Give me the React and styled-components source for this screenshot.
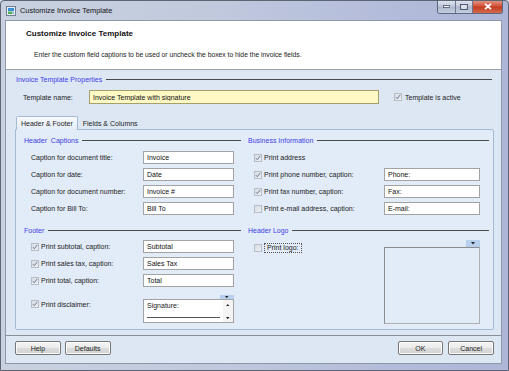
import React from "react";
import styled, { createGlobalStyle } from "styled-components";

const GlobalStyle = createGlobalStyle`
  html, body { margin: 0; padding: 0; }
  body { font-family: "Liberation Sans", Arial, sans-serif; background: #d8dde6; }
  * { box-sizing: border-box; }
`;

const Window = styled.div`
  width: 509px;
  height: 371px;
  display: flex;
  flex-direction: column;
  background: linear-gradient(90deg, #c9d1e0 0%, #c1cadd 40%, #b4bcdb 75%, #aeb6d8 100%);
  border: 1px solid #5d6573;
  border-radius: 4px 4px 0 0;
  overflow: hidden;
  color: #1b1b1b;
  font-size: 7px;
`;

const TitleBar = styled.div`
  height: 19px;
  display: flex;
  align-items: flex-start;
`;

const AppIcon = styled.div`
  width: 10px;
  height: 10px;
  margin: 5px 4px 0 5px;
  display: flex;
`;

const TitleText = styled.div`
  margin-top: 5px;
  font-size: 7.4px;
  color: #111;
`;

const Controls = styled.div`
  margin-left: auto;
  margin-right: 5px;
  display: flex;
  height: 14px;
  margin-top: -1px;
  border: 1px solid #5c6880;
  border-top: none;
  border-radius: 0 0 3px 3px;
  overflow: hidden;
`;

const CtrlButton = styled.div`
  width: ${(p) => p.$w}px;
  height: 100%;
  display: flex;
  align-items: center;
  justify-content: center;
  background: ${(p) =>
    p.$close
      ? "linear-gradient(180deg, #e3a08f 0%, #d2553c 45%, #c23d22 55%, #d76a4a 100%)"
      : "linear-gradient(180deg, #e2e7f1 0%, #c3cbdc 45%, #aeb8cd 55%, #c6cfe0 100%)"};
  border-left: ${(p) => (p.$first ? "none" : "1px solid #6d7890")};
`;

const Client = styled.div`
  flex: 1;
  margin: 0 6px 6px 4px;
  display: flex;
  flex-direction: column;
  border: 1px solid #8e98a9;
  background: #dde7f4;
`;

const Header = styled.div`
  height: 49px;
  background: #ffffff;
  border-bottom: 1px solid #9aa1ab;
  padding: 8px 0 0 20px;
  display: flex;
  flex-direction: column;
`;

const HeaderTitle = styled.div`
  font-weight: bold;
  font-size: 8px;
  color: #111;
  height: 10px;
  line-height: 10px;
`;

const HeaderDesc = styled.div`
  margin: 11px 0 0 8px;
  font-size: 6.75px;
  color: #222;
  height: 10px;
  line-height: 10px;
`;

const Body = styled.div`
  flex: 1;
  display: flex;
  flex-direction: column;
  padding: 4px 7px 5px 9px;
`;

const GroupHeading = styled.div`
  display: flex;
  align-items: center;
  height: 10px;
  margin-left: ${(p) => p.$indent || 0}px;
  margin-right: ${(p) => p.$right || 0}px;
  color: #3d3de4;
  font-size: 7px;
  white-space: nowrap;
  &::after {
    content: "";
    flex: 1;
    height: 1px;
    background: #4a4a4a;
    margin-left: 4px;
  }
`;

const TemplateRow = styled.div`
  display: flex;
  align-items: center;
  height: 14px;
  margin: 6px 0 0 8px;
`;

const Label = styled.span`
  white-space: nowrap;
  color: #1b1b1b;
  font-size: 7px;
`;

const TemplateLabel = styled(Label)`
  width: 66px;
`;

const TextBox = styled.input`
  width: ${(p) => p.$w}px;
  height: ${(p) => p.$h || 13}px;
  border: 1px solid ${(p) => (p.$yellow ? "#a79f6b" : "#a3a3a3")};
  background: ${(p) => (p.$yellow ? "#fdf9c4" : "#ffffff")};
  font-family: "Liberation Sans", Arial, sans-serif;
  font-size: 7px;
  color: #111;
  padding: 0 3px;
  outline: none;
  margin: 0;
`;

const ActiveWrap = styled.label`
  display: flex;
  align-items: center;
  gap: 3px;
  margin-left: 15px;
`;

const Box = styled.span`
  width: 8px;
  height: 8px;
  flex: none;
  border: 1px solid #b8bcc4;
  background: linear-gradient(135deg, #d9dde3 0%, #eef0f3 100%);
  display: flex;
  align-items: center;
  justify-content: center;
`;

const Check = ({ on }) => (
  <Box>
    {on && (
      <svg width="6" height="6" viewBox="0 0 6 6">
        <path d="M0.9 3.2 L2.3 4.7 L5.2 0.9" fill="none" stroke="#5a6b8c" strokeWidth="0.9" />
      </svg>
    )}
  </Box>
);

const TabStrip = styled.div`
  display: flex;
  align-items: flex-end;
  height: 14px;
  margin-top: 11px;
  padding-left: 1px;
`;

const Tab = styled.div`
  height: ${(p) => (p.$active ? 14 : 12)}px;
  padding: 0 ${(p) => (p.$active ? 4 : 5)}px;
  display: flex;
  align-items: center;
  font-size: 7px;
  white-space: nowrap;
  background: ${(p) => (p.$active ? "linear-gradient(180deg, #f7fafd, #e3ecf8)" : "transparent")};
  border: ${(p) => (p.$active ? "1px solid #a4bbd6" : "none")};
  border-bottom: none;
  border-radius: 2px 2px 0 0;
  margin-bottom: ${(p) => (p.$active ? -1 : 0)}px;
  position: relative;
  z-index: 1;
`;

const Panel = styled.div`
  flex: 1;
  background: #e2ebf8;
  border: 1px solid #a4bbd6;
  border-radius: 0 2px 2px 2px;
  padding: 5px 4px 0 8px;
  display: grid;
  grid-template-columns: 217px 242px;
  grid-template-rows: 80px auto;
  column-gap: 7px;
  row-gap: 10px;
  align-content: start;
`;

const Section = styled.div`
  display: flex;
  flex-direction: column;
`;

const Rows = styled.div`
  display: flex;
  flex-direction: column;
  gap: ${(p) => p.$gap ?? 4}px;
  margin-top: ${(p) => p.$top ?? 6}px;
  padding-left: ${(p) => p.$indent}px;
`;

const Row = styled.div`
  display: grid;
  grid-template-columns: ${(p) => p.$col}px auto;
  align-items: ${(p) => p.$align || "center"};
  min-height: 13px;
`;

const CheckLabel = styled.div`
  display: flex;
  align-items: center;
  gap: ${(p) => p.$gap ?? 2}px;
  margin-top: ${(p) => p.$top || 0}px;
`;

const FocusLabel = styled.span`
  border: 1px dotted #555;
  padding: 0 2px;
  line-height: 8px;
  white-space: nowrap;
`;

const DropTab = styled.div`
  width: 14px;
  height: ${(p) => p.$h}px;
  align-self: flex-end;
  background: #b6d0ee;
  display: flex;
  align-items: center;
  justify-content: center;
`;

const MemoWrap = styled.div`
  width: 91px;
  display: flex;
  flex-direction: column;
`;

const Memo = styled.div`
  height: 24px;
  border: 1px solid #a3a3a3;
  background: #ffffff;
  display: flex;
`;

const MemoText = styled.div`
  flex: 1;
  padding: 2px 3px 0;
  display: flex;
  flex-direction: column;
  font-size: 7px;
`;

const SigLine = styled.div`
  height: 1px;
  background: #555;
  margin-top: 8px;
`;

const ScrollBar = styled.div`
  width: 10px;
  display: flex;
  flex-direction: column;
  justify-content: space-between;
  align-items: center;
  padding: 4px 0 3px;
  background: #f4f4f4;
`;

const LogoWrap = styled.div`
  display: flex;
  flex-direction: column;
  width: 96px;
`;

const LogoBox = styled.div`
  height: 77px;
  border: 1px solid #8d8d8d;
  border-right-color: #b0b0b0;
  border-bottom-color: #b0b0b0;
  background: #e2ebf8;
`;

const BottomBar = styled.div`
  height: 28px;
  border-top: 1px solid #8a9099;
  display: flex;
  align-items: flex-start;
  padding: 5px 7px 0 9px;
  gap: 4px;
`;

const Button = styled.button`
  width: 46px;
  height: 14px;
  margin-left: ${(p) => p.$ml || 0}px;
  padding: 0;
  border: 1px solid #767676;
  border-radius: 2px;
  background: linear-gradient(180deg, #f4f4f4 0%, #ebebeb 48%, #dcdcdc 52%, #d2d2d2 100%);
  font-family: "Liberation Sans", Arial, sans-serif;
  font-size: 7px;
  color: #1b1b1b;
  box-shadow: inset 0 0 0 1px #fbfbfb;
`;

const Tri = ({ down = true, size = 4 }) => (
  <svg width={size} height={size / 2 + 0.5} viewBox="0 0 4 2.5">
    <path d={down ? "M0 0 H4 L2 2.5 Z" : "M0 2.5 H4 L2 0 Z"} fill="#222" />
  </svg>
);

const InvoiceIcon = () => (
  <svg width="10" height="10" viewBox="0 0 10 10">
    <rect x="0.5" y="0.5" width="9" height="9" fill="#e9eef4" stroke="#6d7f95" />
    <rect x="2" y="2" width="6" height="3" fill="#3b8fd6" />
    <rect x="2" y="5.5" width="4" height="2.5" fill="#4fae49" />
    <rect x="6.3" y="5.5" width="1.7" height="2.5" fill="#8fb1d6" />
  </svg>
);

const captions = [
  ["Caption for document title:", "Invoice"],
  ["Caption for date:", "Date"],
  ["Caption for document number:", "Invoice #"],
  ["Caption for Bill To:", "Bill To"],
];

const business = [
  ["Print address", true, null],
  ["Print phone number, caption:", true, "Phone:"],
  ["Print fax number, caption:", true, "Fax:"],
  ["Print e-mail address, caption:", false, "E-mail:"],
];

const footer = [
  ["Print subtotal, caption:", "Subtotal"],
  ["Print sales tax, caption:", "Sales Tax"],
  ["Print total, caption:", "Total"],
];

export default function App() {
  return (
    <>
      <GlobalStyle />
      <Window>
        <TitleBar>
          <AppIcon>
            <InvoiceIcon />
          </AppIcon>
          <TitleText>Customize Invoice Template</TitleText>
          <Controls>
            <CtrlButton $w={17} $first>
              <svg width="7" height="3" viewBox="0 0 7 3">
                <rect x="0.5" y="0.5" width="6" height="2" fill="#fff" stroke="#46526a" strokeWidth="0.8" />
              </svg>
            </CtrlButton>
            <CtrlButton $w={17}>
              <svg width="8" height="6" viewBox="0 0 8 6">
                <rect x="0.5" y="0.5" width="7" height="5" fill="none" stroke="#46526a" strokeWidth="0.9" />
                <rect x="2" y="2" width="4" height="2" fill="none" stroke="#fff" strokeWidth="0.9" />
              </svg>
            </CtrlButton>
            <CtrlButton $w={30} $close>
              <svg width="8" height="7" viewBox="0 0 8 7">
                <path d="M1 0.8 L7 6.2 M7 0.8 L1 6.2" stroke="#fff" strokeWidth="1.8" />
              </svg>
            </CtrlButton>
          </Controls>
        </TitleBar>
        <Client>
          <Header>
            <HeaderTitle>Customize Invoice Template</HeaderTitle>
            <HeaderDesc>
              Enter the custom field captions to be used or uncheck the boxex to hide the invoice fields.
            </HeaderDesc>
          </Header>
          <Body>
            <GroupHeading $indent={1} $right={2}>Invoice Template Properties</GroupHeading>
            <TemplateRow>
              <TemplateLabel>Template name:</TemplateLabel>
              <TextBox $w={290} $h={14} $yellow readOnly value="Invoice Template with signature" />
              <ActiveWrap>
                <Check on />
                <Label>Template is active</Label>
              </ActiveWrap>
            </TemplateRow>
            <TabStrip>
              <Tab $active>Header &amp; Footer</Tab>
              <Tab>Fields &amp; Columns</Tab>
            </TabStrip>
            <Panel>
              <Section>
                <GroupHeading>Header&nbsp; Captions</GroupHeading>
                <Rows $indent={7}>
                  {captions.map(([l, v]) => (
                    <Row key={l} $col={112}>
                      <Label>{l}</Label>
                      <TextBox $w={91} readOnly value={v} />
                    </Row>
                  ))}
                </Rows>
              </Section>
              <Section>
                <GroupHeading $right={1}>Business Information</GroupHeading>
                <Rows $indent={6} $gap={4}>
                  {business.map(([l, on, v]) => (
                    <Row key={l} $col={130}>
                      <CheckLabel>
                        <Check on={on} />
                        <Label>{l}</Label>
                      </CheckLabel>
                      {v ? <TextBox $w={96} readOnly value={v} /> : <span />}
                    </Row>
                  ))}
                </Rows>
              </Section>
              <Section>
                <GroupHeading>Footer</GroupHeading>
                <Rows $indent={7} $top={5}>
                  {footer.map(([l, v]) => (
                    <Row key={l} $col={112}>
                      <CheckLabel>
                        <Check on />
                        <Label>{l}</Label>
                      </CheckLabel>
                      <TextBox $w={91} readOnly value={v} />
                    </Row>
                  ))}
                </Rows>
                <Rows $indent={7} $top={8}>
                  <Row $col={112} $align="start">
                    <CheckLabel $top={5}>
                      <Check on />
                      <Label>Print disclaimer:</Label>
                    </CheckLabel>
                    <MemoWrap>
                      <DropTab $h={4}>
                        <Tri size={3.5} />
                      </DropTab>
                      <Memo>
                        <MemoText>
                          <span>Signature:</span>
                          <SigLine />
                        </MemoText>
                        <ScrollBar>
                          <Tri down={false} size={3.5} />
                          <Tri size={3.5} />
                        </ScrollBar>
                      </Memo>
                    </MemoWrap>
                  </Row>
                </Rows>
              </Section>
              <Section>
                <GroupHeading $right={1}>Header Logo</GroupHeading>
                <Rows $indent={6} $top={5}>
                  <Row $col={130} $align="start">
                    <CheckLabel $top={3}>
                      <Check />
                      <FocusLabel>Print logo:</FocusLabel>
                    </CheckLabel>
                    <LogoWrap>
                      <DropTab $h={7}>
                        <Tri size={4} />
                      </DropTab>
                      <LogoBox />
                    </LogoWrap>
                  </Row>
                </Rows>
              </Section>
            </Panel>
          </Body>
          <BottomBar>
            <Button>Help</Button>
            <Button>Defaults</Button>
            <Button $ml={283}>OK</Button>
            <Button $ml={1}>Cancel</Button>
          </BottomBar>
        </Client>
      </Window>
    </>
  );
}
